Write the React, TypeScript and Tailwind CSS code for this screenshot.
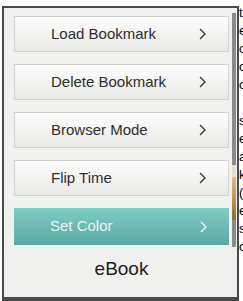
const items = ["Load Bookmark", "Delete Bookmark", "Browser Mode", "Flip Time"];

const behind = ["t", "e", "o", "c", "c", "", "s", "e", "a", "k", "(", "e", "s", "c"];

const Chevron = ({ color }: { color: string }) => (
  <svg width="7" height="12" viewBox="0 0 7 12" fill="none">
    <path d="M1 1 L6 6 L1 11" stroke={color} strokeWidth="1.3" />
  </svg>
);

const App = () => {
  return (
    <div className="w-[243px] h-[301px] overflow-hidden bg-white flex font-['Liberation_Sans',Arial,sans-serif]">
      <div className="w-[2px] shrink-0" />
      <div className="mt-[6px] w-[237px] h-[295px] shrink-0 border-2 border-b-4 border-[#4a4a4a] bg-[#f0f0ee] flex">
        <div className="w-[225px] flex flex-col pt-[8px] pl-[10px]">
          <div className="flex flex-col gap-[12px]">
            {items.map((label) => (
              <div
                key={label}
                className="w-[215px] h-[36px] flex items-center justify-between pl-[36px] pr-[22px] border border-[#d2d2d0] bg-gradient-to-b from-[#fdfdfd] to-[#e9e9e7] text-[15px] text-[#2e2e2e]"
              >
                <span>{label}</span>
                <Chevron color="#333" />
              </div>
            ))}
            <div className="w-[215px] h-[37px] flex items-center justify-between pl-[36px] pr-[22px] bg-gradient-to-b from-[#7fcdc5] to-[#5ba9a2] text-[15px] text-[#e4f5f3]">
              <span>Set Color</span>
              <Chevron color="#eaf8f6" />
            </div>
          </div>
          <div className="flex-1 flex items-center justify-center text-[19px] text-[#1e1e1e] pb-[4px]">
            eBook
          </div>
        </div>
        <div className="ml-[3px] mt-[5px] w-[4px] h-[234px] bg-[#8a8a8a] flex flex-col">
          <div className="h-[152px]" />
          <div className="h-[12px] bg-[#e6ddc8]" />
          <div className="h-[43px] bg-gradient-to-b from-[#d9c08a] to-[#9a6a28]" />
        </div>
      </div>
      <div className="flex-1 overflow-hidden pt-[4px] text-[13px] leading-[18px] text-black">
        {behind.map((c, i) => (
          <div key={i} className="h-[18px]">
            {c}
          </div>
        ))}
      </div>
    </div>
  );
};

export default App;
